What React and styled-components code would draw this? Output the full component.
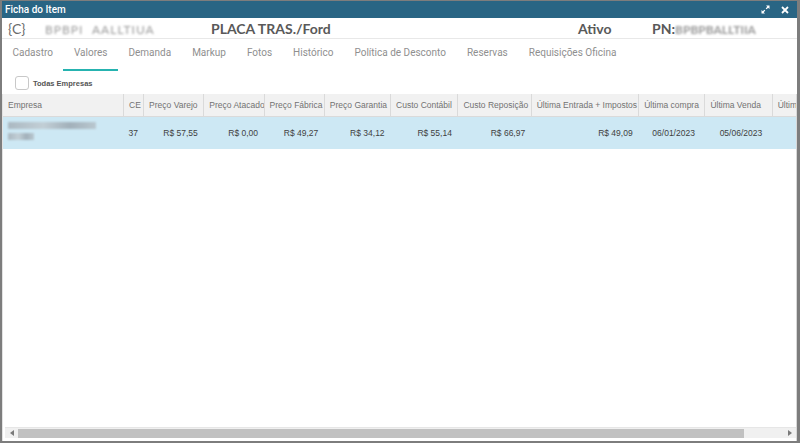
import React from 'react'
import styled, { createGlobalStyle } from 'styled-components'

const Global = createGlobalStyle`
  html, body { margin: 0; padding: 0; background: #ffffff; }
  * { box-sizing: border-box; }
`;

const Win = styled.div`
  width: 800px;
  height: 443px;
  display: flex;
  flex-direction: column;
  border-style: solid;
  border-color: #7d7d7d;
  border-width: 1px 3px 2px 2px;
  background: #fff;
  overflow: hidden;
`;

const TitleBar = styled.div`
  height: 17px;
  flex: 0 0 auto;
  background: #296584;
  display: flex;
  align-items: center;
  padding: 0 8px 0 3px;
  color: #fff;
  font-family: "Roboto", "Liberation Sans", sans-serif;
  font-size: 10px;
  font-weight: 500;
`;

const TitleText = styled.div`
  flex: 1 1 auto;
`;

const TitleIcons = styled.div`
  display: flex;
  align-items: center;
  gap: 11px;
`;

const Header = styled.div`
  height: 21px;
  flex: 0 0 auto;
  display: flex;
  align-items: center;
  border-bottom: 1px solid #e8e8e8;
  font-family: "Lato", "Liberation Sans", sans-serif;
  font-size: 14px;
  color: #595959;
  position: relative;
`;

const HItem = styled.div`
  position: absolute;
  left: ${p => p.x}px;
  font-weight: ${p => (p.bold ? 700 : 400)};
  color: ${p => (p.bold ? '#595959' : '#6a6a6a')};
  white-space: nowrap;
`;

const Blur = styled.span`
  filter: blur(1.1px);
  color: ${p => p.color || '#9a9a9a'};
  font-size: 12px;
  letter-spacing: ${p => p.ls || 0}px;
`;

const Tabs = styled.div`
  height: 32px;
  flex: 0 0 auto;
  display: flex;
  align-items: stretch;
`;

const Tab = styled.div`
  padding: 8px 10.5px 0;
  font-family: "Roboto", "Liberation Sans", sans-serif;
  font-size: 10px;
  line-height: 12px;
  color: #8f8f8f;
  border-bottom: 2px solid ${p => (p.active ? '#26b3b0' : 'transparent')};
  white-space: nowrap;
`;

const CheckRow = styled.div`
  height: 21px;
  flex: 0 0 auto;
  display: flex;
  align-items: center;
  padding: 3px 0 0 13px;
  gap: 4px;
`;

const Check = styled.div`
  width: 14px;
  height: 14px;
  border: 1px solid #c8c8c8;
  border-radius: 3px;
  background: #fff;
`;

const CheckLabel = styled.div`
  font-family: "Liberation Sans", Arial, sans-serif;
  font-size: 7.5px;
  font-weight: 700;
  color: #555;
`;

const Grid = styled.div`
  flex: 1 1 auto;
  margin: 2px 0 0 0;
  display: flex;
  flex-direction: column;
  border-left: 1px solid #e2e2e2;
  border-right: 1px solid #d8d8d8;
  min-height: 0;
`;

const TableWrap = styled.div`
  flex: 1 1 auto;
  overflow: hidden;
`;

const Table = styled.table`
  border-collapse: collapse;
  table-layout: fixed;
  width: 830px;
  font-family: "Liberation Sans", Arial, sans-serif;
  font-size: 8.5px;
`;

const Th = styled.th`
  height: 22px;
  background: #f1f1f1;
  border-right: 1px solid #dadada;
  border-bottom: 1px solid #dadada;
  font-weight: 400;
  font-size: 8.5px;
  color: #727272;
  text-align: left;
  padding: 0 3px 0 5px;
  white-space: nowrap;
  overflow: hidden;
`;

const Td = styled.td`
  height: 33px;
  background: #cde8f4;
  color: #3f3f3f;
  text-align: ${p => (p.left ? 'left' : 'right')};
  padding: 0 ${p => p.pr || 6}px 0 5px;
  white-space: nowrap;
  overflow: hidden;
  vertical-align: middle;
`;

const EmpLine = styled.div`
  height: 7px;
  width: ${p => p.w}px;
  margin: 1px 0 4px;
  background: linear-gradient(90deg, #a3adb5, #c0c9cf 40%, #98a3ac 70%, #b5c0c7);
  filter: blur(1px);
  opacity: 0.8;
`;

const HScroll = styled.div`
  height: 11px;
  flex: 0 0 auto;
  margin: 0 0 3px 2px;
  display: flex;
  align-items: center;
  background: #f0f0f0;
  border-top: 1px solid #e6e6e6;
`;

const Arrow = styled.div`
  width: 13px;
  display: flex;
  justify-content: center;
  align-items: center;
`;

const Thumb = styled.div`
  height: 9px;
  width: 726px;
  background: #c1c1c1;
`;

const Track = styled.div`
  flex: 1 1 auto;
`;

const cols = [
  ['Empresa', 120],
  ['CE', 20],
  ['Preço Varejo', 60],
  ['Preço Atacado', 60],
  ['Preço Fábrica', 60],
  ['Preço Garantia', 66],
  ['Custo Contábil', 67],
  ['Custo Reposição', 73],
  ['Última Entrada + Impostos', 107],
  ['Última compra', 66],
  ['Última Venda', 67],
  ['Última Venda', 60],
];

const row = ['37', 'R$ 57,55', 'R$ 0,00', 'R$ 49,27', 'R$ 34,12', 'R$ 55,14', 'R$ 66,97', 'R$ 49,09', '06/01/2023', '05/06/2023', ''];

const tabs = ['Cadastro', 'Valores', 'Demanda', 'Markup', 'Fotos', 'Histórico', 'Política de Desconto', 'Reservas', 'Requisições Oficina'];

export default function App() {
  return (
    <>
      <Global />
      <Win>
        <TitleBar>
          <TitleText>Ficha do Item</TitleText>
          <TitleIcons>
            <svg width="9" height="9" viewBox="0 0 9 9">
              <path d="M5 0.5h3.5V4L7.2 2.7 5.6 4.3 4.7 3.4 6.3 1.8z M0.5 5v3.5H4L2.7 7.2 4.3 5.6 3.4 4.7 1.8 6.3z" fill="#fff" />
            </svg>
            <svg width="8" height="8" viewBox="0 0 8 8">
              <path d="M1 1L7 7M7 1L1 7" stroke="#fff" strokeWidth="1.8" />
            </svg>
          </TitleIcons>
        </TitleBar>
        <Header>
          <HItem x={6}>{'{C}'}</HItem>
          <HItem x={43}><Blur ls={1}>BPBPI</Blur></HItem>
          <HItem x={90}><Blur ls={1}>AALLTIUA</Blur></HItem>
          <HItem x={209} bold>PLACA TRAS./Ford</HItem>
          <HItem x={576} bold>Ativo</HItem>
          <HItem x={650} bold>PN:<Blur color="#999">BPBPBALLTIIA</Blur></HItem>
        </Header>
        <Tabs>
          {tabs.map(t => (
            <Tab key={t} active={t === 'Valores'}>{t}</Tab>
          ))}
        </Tabs>
        <CheckRow>
          <Check />
          <CheckLabel>Todas Empresas</CheckLabel>
        </CheckRow>
        <Grid>
          <TableWrap>
            <Table>
              <colgroup>
                {cols.map(([n, w], i) => <col key={i} style={{ width: w }} />)}
              </colgroup>
              <thead>
                <tr>
                  {cols.map(([n], i) => <Th key={i}>{n}</Th>)}
                </tr>
              </thead>
              <tbody>
                <tr>
                  <Td left>
                    <EmpLine w={88} />
                    <EmpLine w={26} />
                  </Td>
                  {row.map((v, i) => (
                    <Td key={i} pr={i >= 8 ? 10 : 6}>{v}</Td>
                  ))}
                </tr>
              </tbody>
            </Table>
          </TableWrap>
          <HScroll>
            <Arrow>
              <svg width="4" height="6" viewBox="0 0 4 6"><path d="M4 0v6L0 3z" fill="#7a7a7a" /></svg>
            </Arrow>
            <Thumb />
            <Track />
            <Arrow>
              <svg width="4" height="6" viewBox="0 0 4 6"><path d="M0 0v6l4-3z" fill="#7a7a7a" /></svg>
            </Arrow>
          </HScroll>
        </Grid>
      </Win>
    </>
  )
}
